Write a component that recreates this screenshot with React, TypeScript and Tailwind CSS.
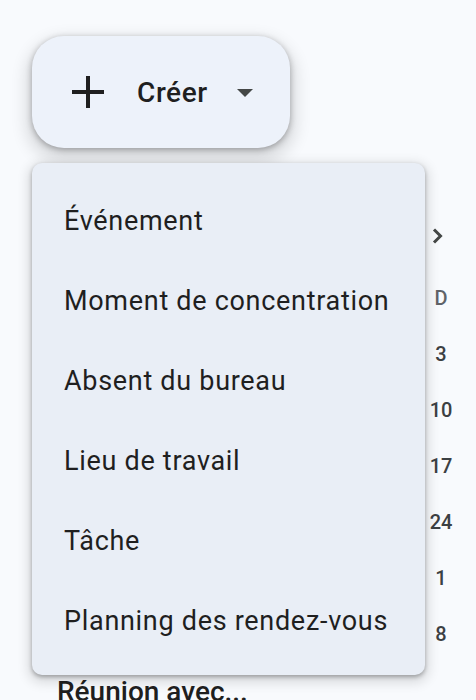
import React from "react";

const items = [
  "Événement",
  "Moment de concentration",
  "Absent du bureau",
  "Lieu de travail",
  "Tâche",
  "Planning des rendez-vous",
];

const days = ["D", "3", "10", "17", "24", "1", "8"];

export default function App() {
  return (
    <div
      className="relative w-[476px] h-[700px] overflow-hidden bg-[#f8fafd] text-[#1f1f1f]"
      style={{ fontFamily: "Roboto, 'Noto Sans', Arial, sans-serif" }}
    >
      {/* Create button */}
      <div className="pt-[36px] pl-[32px]">
        <button className="flex items-center w-[258px] h-[112px] rounded-[32px] bg-[#edf2fa] shadow-[0_2px_6px_rgba(0,0,0,0.3),0_8px_16px_6px_rgba(0,0,0,0.12)]">
          <svg width="32" height="32" viewBox="0 0 32 32" className="ml-[40px]">
            <rect x="14" y="0" width="4" height="32" fill="#1f1f1f" />
            <rect x="0" y="14" width="32" height="4" fill="#1f1f1f" />
          </svg>
          <span className="ml-[33px] mt-[2px] text-[28px] leading-none font-medium tracking-[0.6px] text-[#1f1f1f]">Créer</span>
          <svg width="16" height="8" viewBox="0 0 16 8" className="ml-[29px] mt-[2px]">
            <path d="M0 0 L16 0 L8 8 Z" fill="#444746" />
          </svg>
        </button>
      </div>

      {/* Underlying mini calendar */}
      <div className="flex justify-end pr-[20px] mt-[68px]">
        <div className="flex flex-col items-center w-[30px]">
          <div className="h-[40px] flex items-center justify-center -ml-[6px]">
            <svg width="12" height="16" viewBox="0 0 12 16">
              <path d="M2 1.5 L8.5 8 L2 14.5" fill="none" stroke="#444746" strokeWidth="3" />
            </svg>
          </div>
          <div className="h-[14px]" />
          {days.map((d, i) => (
            <div
              key={i}
              className={`h-[56px] flex items-center justify-center text-[20px] font-medium ${
                i === 0 ? "text-[#5f6368]" : "text-[#3c4043]"
              }`}
            >
              {d}
            </div>
          ))}
        </div>
      </div>
      <div className="pl-[57px] mt-[12px] text-[28px] leading-[36px] font-medium text-[#1f1f1f]">Réunion avec...</div>

      {/* Dropdown menu overlay */}
      <div className="absolute left-[32px] top-[163px] w-[393px] pt-[18px] pb-[14px] rounded-[10px] bg-[#e9eef6] shadow-[0_2px_4px_rgba(0,0,0,0.3),0_4px_12px_4px_rgba(0,0,0,0.12)]">
        {items.map((t) => (
          <div key={t} className="h-[80px] flex items-center pl-[32px] text-[27px] tracking-[0.7px] text-[#1f1f1f]">
            {t}
          </div>
        ))}
      </div>
    </div>
  );
}
